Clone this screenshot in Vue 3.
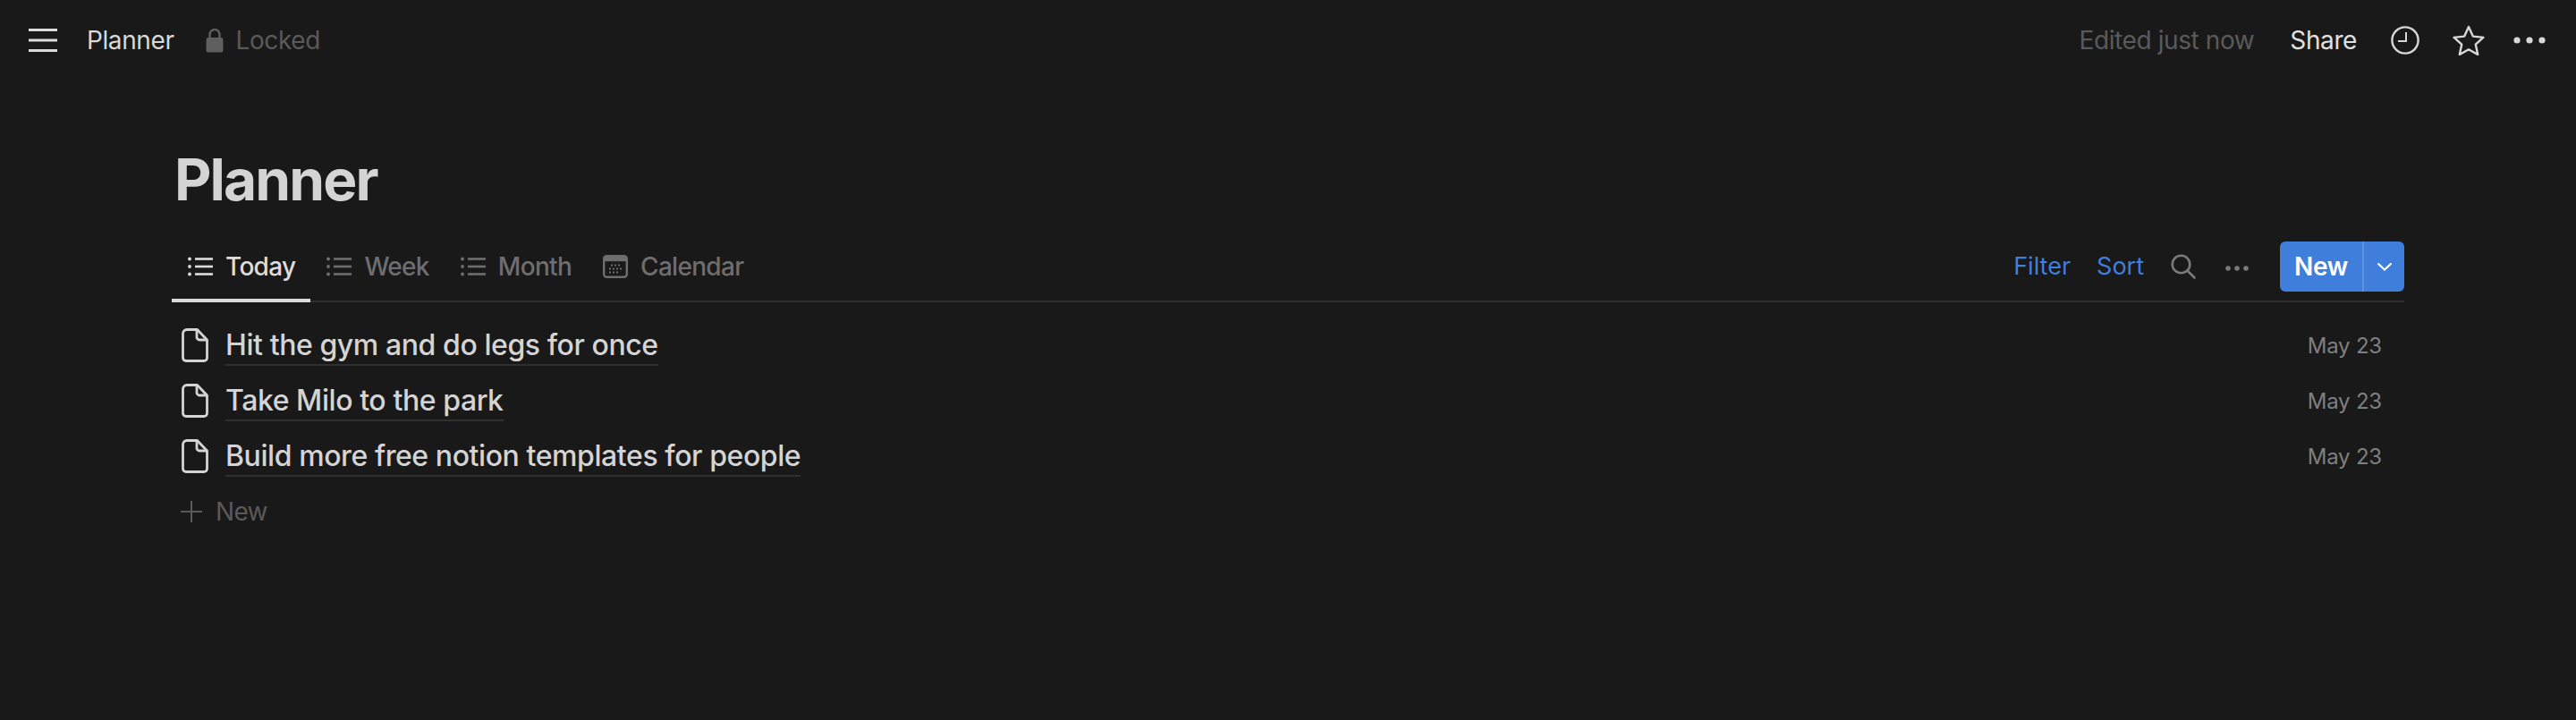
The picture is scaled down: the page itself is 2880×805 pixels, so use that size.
<template>
  <div class="page">
    <header class="topbar">
      <div class="top-left">
        <svg class="burger" width="32" height="26" viewBox="0 0 32 26">
          <path d="M0 1.5h32M0 13h32M0 24.5h32" stroke="#dcdcdc" stroke-width="3" />
        </svg>
        <span class="crumb">Planner</span>
        <svg class="lock" width="20" height="28" viewBox="0 0 20 28">
          <path d="M4.5 12V7.5a5.5 5.5 0 0 1 11 0V12" fill="none" stroke="#5f5f5f" stroke-width="2.4" />
          <rect x="0.5" y="11" width="19" height="16.5" rx="2.5" fill="#5f5f5f" />
        </svg>
        <span class="locked">Locked</span>
      </div>
      <div class="top-right">
        <span class="edited">Edited just now</span>
        <span class="share">Share</span>
        <svg class="clock" width="32" height="32" viewBox="0 0 32 32" fill="none" stroke="#d8d8d8" stroke-width="2.4">
          <circle cx="16" cy="16" r="14.6" />
          <path d="M17 7v10H8" stroke-width="2" />
        </svg>
        <svg class="star" width="36" height="34" viewBox="0 0 36 34" fill="none" stroke="#d8d8d8" stroke-width="2.4" stroke-linejoin="round">
          <path d="M18 2l4.8 10.6 11.6 1.3-8.6 7.8 2.4 11.3L18 27.2 7.8 33l2.4-11.3-8.6-7.8 11.6-1.3z" />
        </svg>
        <svg class="dots" width="36" height="8" viewBox="0 0 36 8" fill="#d8d8d8">
          <circle cx="4" cy="4" r="3.6" />
          <circle cx="18" cy="4" r="3.6" />
          <circle cx="32" cy="4" r="3.6" />
        </svg>
      </div>
    </header>

    <main class="content">
      <h1 class="title">Planner</h1>

      <div class="toolbar">
        <div class="tabs">
          <div v-for="tab in tabs" :key="tab.name" :class="['tab', { active: tab.active }]">
            <svg v-if="tab.icon === 'list'" class="tab-icon" width="28" height="24" viewBox="0 0 28 24" fill="currentColor">
              <circle cx="2" cy="3.5" r="1.9" />
              <circle cx="2" cy="12" r="1.9" />
              <circle cx="2" cy="20.5" r="1.9" />
              <rect x="8" y="2.2" width="20" height="2.6" />
              <rect x="8" y="10.7" width="20" height="2.6" />
              <rect x="8" y="19.2" width="20" height="2.6" />
            </svg>
            <svg v-else class="tab-icon" width="28" height="26" viewBox="0 0 28 26">
              <rect x="1.2" y="1.2" width="25.6" height="23.6" rx="3" fill="none" stroke="currentColor" stroke-width="2.4" />
              <rect x="1.2" y="1.2" width="25.6" height="6" fill="currentColor" />
              <path d="M9 11.5h12M7 15.5h14M7 19.5h10" stroke="currentColor" stroke-width="2" stroke-dasharray="2 2" fill="none" />
            </svg>
            <span>{{ tab.name }}</span>
          </div>
        </div>
        <div class="actions">
          <span class="link filter">Filter</span>
          <span class="link">Sort</span>
          <svg class="search" width="28" height="28" viewBox="0 0 28 28" fill="none" stroke="#7a7a7a" stroke-width="2.6">
            <circle cx="11.5" cy="11.5" r="9.8" />
            <path d="M18.5 18.5l8 8" stroke-linecap="round" />
          </svg>
          <svg class="more" width="26" height="6" viewBox="0 0 26 6" fill="#7a7a7a">
            <circle cx="3" cy="3" r="2.8" />
            <circle cx="13" cy="3" r="2.8" />
            <circle cx="23" cy="3" r="2.8" />
          </svg>
          <div class="new-btn">
            <span class="new-label">New</span>
            <span class="new-arrow">
              <svg width="18" height="10" viewBox="0 0 18 10" fill="none" stroke="#fff" stroke-width="2.2">
                <path d="M1.5 1.5L9 8.5l7.5-7" />
              </svg>
            </span>
          </div>
        </div>
      </div>

      <div class="rows">
        <div v-for="item in items" :key="item.title" class="row">
          <svg class="doc" width="30" height="38" viewBox="0 0 30 38" fill="none" stroke="#d4d4d4" stroke-width="2.8" stroke-linejoin="round">
            <path d="M6 1.5h11.5L28.5 13v20a3.5 3.5 0 0 1-3.5 3.5H5A3.5 3.5 0 0 1 1.5 33V6A4.5 4.5 0 0 1 6 1.5z" />
            <path d="M17 2v8a3 3 0 0 0 3 3h8" />
          </svg>
          <span class="row-title">{{ item.title }}</span>
          <span class="row-date">{{ item.date }}</span>
        </div>
        <div class="add-row">
          <svg width="24" height="24" viewBox="0 0 24 24" stroke="#5a5a5a" stroke-width="2">
            <path d="M12 0v24M0 12h24" />
          </svg>
          <span>New</span>
        </div>
      </div>
    </main>
  </div>
</template>

<script setup>
import { ref } from 'vue'

const tabs = ref([
  { name: 'Today', icon: 'list', active: true },
  { name: 'Week', icon: 'list' },
  { name: 'Month', icon: 'list' },
  { name: 'Calendar', icon: 'calendar' }
])

const items = ref([
  { title: 'Hit the gym and do legs for once', date: 'May 23' },
  { title: 'Take Milo to the park', date: 'May 23' },
  { title: 'Build more free notion templates for people', date: 'May 23' }
])
</script>

<style>
html,
body {
  background: #191919;
}
</style>

<style scoped>
.page {
  width: 2880px;
  height: 805px;
  overflow: hidden;
  background: #191919;
  font-family: Inter, "Liberation Sans", sans-serif;
  color: #d4d4d4;
}

.topbar {
  height: 90px;
  display: flex;
  justify-content: space-between;
  align-items: center;
  padding: 0 34px 0 32px;
  font-size: 28px;
  letter-spacing: -0.4px;
}

.top-left,
.top-right {
  display: flex;
  align-items: center;
}

.crumb {
  margin-left: 33px;
  color: #d8d8d8;
}

.lock {
  margin-left: 35px;
}

.locked {
  margin-left: 14px;
  color: #5a5a5a;
}

.edited {
  color: #5a5a5a;
}

.share {
  margin-left: 40px;
  color: #e0e0e0;
}

.clock {
  margin-left: 38px;
}

.star {
  margin-left: 37px;
}

.dots {
  margin-left: 32px;
}

.content {
  padding: 0 192px;
}

.title {
  margin: 0;
  padding: 72px 0 0 3px;
  font-size: 64px;
  line-height: 78px;
  font-weight: 700;
  letter-spacing: -1.9px;
  color: #d4d4d4;
}

.toolbar {
  display: flex;
  justify-content: space-between;
  margin-top: 28px;
  height: 68px;
  border-bottom: 2px solid #2f2f2f;
}

.tabs {
  display: flex;
}

.tab {
  display: flex;
  align-items: center;
  gap: 14px;
  padding: 0 17px 6px 18px;
  font-size: 28px;
  font-weight: 500;
  letter-spacing: -0.7px;
  color: #6e6e6e;
  height: 70px;
  box-sizing: border-box;
  border-bottom: 4px solid transparent;
}

.tab.active {
  color: #dcdcdc;
  border-bottom-color: #dcdcdc;
}

.tab-icon {
  flex: none;
}

.actions {
  display: flex;
  align-items: flex-start;
  padding-top: 2px;
}

.link {
  color: #3f7fdb;
  font-size: 27px;
  line-height: 56px;
  margin-right: 29px;
}

.search {
  margin: 14px 0 0 1px;
}

.more {
  margin: 27px 0 0 33px;
}

.new-btn {
  display: flex;
  align-items: stretch;
  width: 139px;
  height: 56px;
  margin-left: 35px;
  background: #3f7fdb;
  border-radius: 6px;
  color: #fff;
  font-size: 28px;
  font-weight: 600;
  letter-spacing: -0.3px;
}

.new-label {
  width: 92px;
  display: flex;
  align-items: center;
  justify-content: center;
}

.new-arrow {
  flex: 1;
  display: flex;
  align-items: center;
  justify-content: center;
  border-left: 2px solid #5f93e0;
}

.rows {
  margin-top: 17px;
}

.row {
  height: 62px;
  display: flex;
  align-items: center;
}

.doc {
  margin-left: 11px;
  flex: none;
}

.row-title {
  margin-left: 19px;
  padding-top: 2px;
  font-size: 32px;
  font-weight: 500;
  line-height: 42px;
  letter-spacing: -0.42px;
  color: #d4d4d4;
  border-bottom: 2px solid #2f2f2f;
}

.row-date {
  margin-left: auto;
  margin-right: 25px;
  font-size: 24px;
  letter-spacing: -0.2px;
  color: #7f7f7f;
}

.add-row {
  height: 62px;
  display: flex;
  align-items: center;
  gap: 15px;
  padding-left: 10px;
  font-size: 28px;
  letter-spacing: -0.7px;
  color: #5a5a5a;
}
</style>
